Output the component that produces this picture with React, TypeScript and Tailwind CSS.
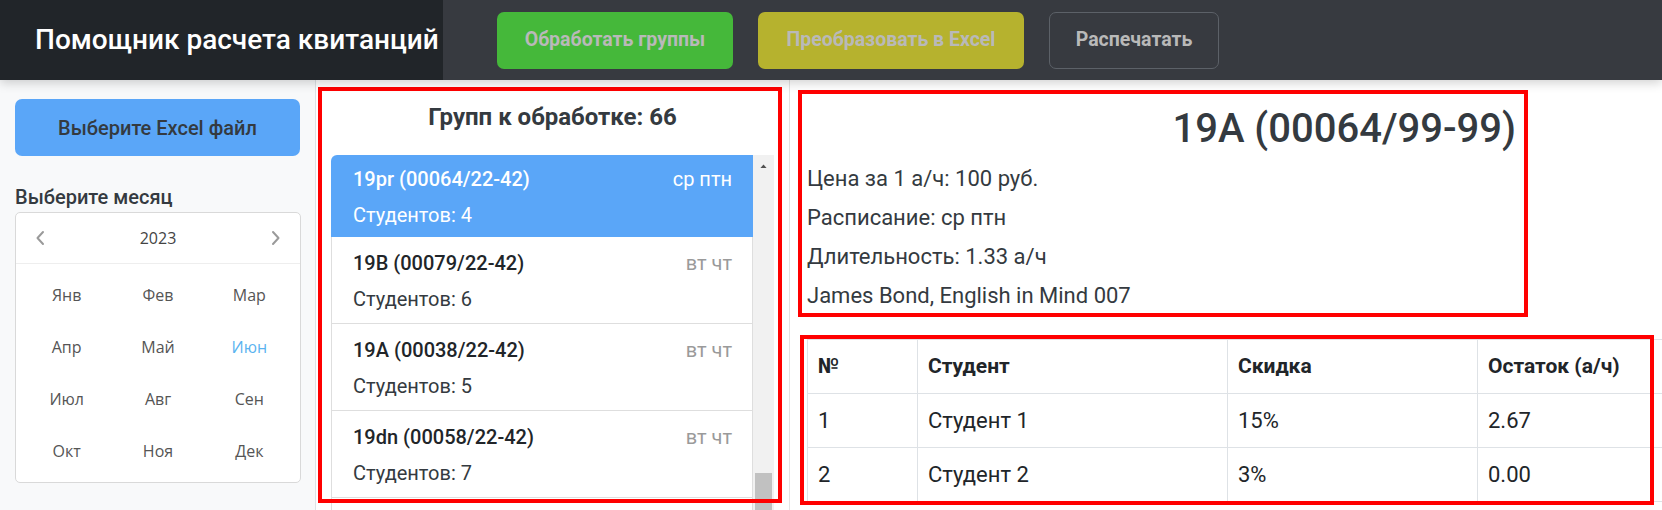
import React from "react";

const groups = [
  { name: "19pr (00064/22-42)", days: "ср птн", count: 4, selected: true },
  { name: "19B (00079/22-42)", days: "вт чт", count: 6 },
  { name: "19A (00038/22-42)", days: "вт чт", count: 5 },
  { name: "19dn (00058/22-42)", days: "вт чт", count: 7 },
];

const months = ["Янв", "Фев", "Мар", "Апр", "Май", "Июн", "Июл", "Авг", "Сен", "Окт", "Ноя", "Дек"];

function Chevron({ dir }: { dir: "l" | "r" }) {
  return (
    <svg width="10" height="16" viewBox="0 0 10 16" fill="none">
      {dir === "l" ? (
        <path d="M8 2 L2.5 8 L8 14" stroke="#9a9a9a" strokeWidth="2" strokeLinecap="round" strokeLinejoin="round" />
      ) : (
        <path d="M2 2 L7.5 8 L2 14" stroke="#9a9a9a" strokeWidth="2" strokeLinecap="round" strokeLinejoin="round" />
      )}
    </svg>
  );
}

export default function App() {
  return (
    <div className="w-[1662px] h-[510px] overflow-hidden bg-white flex flex-col font-['Roboto',sans-serif] text-[#343a40]">
      {/* Header */}
      <header className="relative z-10 h-[80px] flex shrink-0 bg-[#373a40] shadow-[0_3px_10px_rgba(0,0,0,0.18)]">
        <div className="w-[443px] bg-[#212529] flex items-center pl-[35px]">
          <span className="text-white text-[28px] font-medium">Помощник расчета квитанций</span>
        </div>
        <div className="flex items-center pl-[54px] gap-[25px]">
          <button className="w-[236px] h-[57px] rounded-[7px] bg-[#45b83a] text-[#b9b9b9] text-[19.5px] font-bold">
            Обработать группы
          </button>
          <button className="w-[266px] h-[57px] rounded-[7px] bg-[#b6b22e] text-[#b9b9b9] text-[19.5px] font-bold">
            Преобразовать в Excel
          </button>
          <button className="w-[170px] h-[57px] rounded-[7px] border border-[#5c6168] text-[#b9b9b9] text-[19.5px] font-bold">
            Распечатать
          </button>
        </div>
      </header>

      <div className="flex flex-1 min-h-0">
        {/* Sidebar */}
        <aside className="w-[316px] shrink-0 bg-[#f8f9fa] border-r border-[#dee2e6] px-[15px]">
          <button className="mt-[19px] w-[285px] h-[57px] rounded-[7px] bg-[#5aa6f8] text-[#343a40] text-[20px] font-medium">
            Выберите Excel файл
          </button>
          <div className="mt-[27px] leading-[28px] text-[20px] font-medium text-[#343a40]">Выберите месяц</div>
          <div className="mt-[1px] w-[286px] h-[271px] bg-white border border-[#d9d9d9] rounded-[5px] font-['Open_Sans',sans-serif]">
            <div className="h-[51px] border-b border-[#eeeeee] flex items-center justify-between px-[19px]">
              <Chevron dir="l" />
              <span className="text-[16px] text-[#444]">2023</span>
              <Chevron dir="r" />
            </div>
            <div className="grid grid-cols-3 px-[5px] pt-[5px]">
              {months.map((m) => (
                <div
                  key={m}
                  className={`h-[52px] flex items-center justify-center text-[16px] ${m === "Июн" ? "text-[#5ab3f0]" : "text-[#555]"}`}
                >
                  {m}
                </div>
              ))}
            </div>
          </div>
        </aside>

        {/* Middle column */}
        <section className="w-[474px] shrink-0 border-r border-[#e3e3e3] pl-[2px] pr-[7px] pt-[7px]">
          <div className="h-[416px] outline-4 outline-[#ff0000] -outline-offset-4 pl-[13px] pr-[8px] pt-[15px]">
            <div className="h-[30px] leading-[30px] text-center text-[24px] font-bold text-[#343a40]">
              Групп к обработке: 66
            </div>
            <div className="mt-[23px] h-[355px] flex overflow-hidden">
              <div className="w-[423px] flex flex-col">
                {groups.map((g, i) => (
                  <div
                    key={i}
                    className={
                      g.selected
                        ? "h-[82px] shrink-0 bg-[#5aa6f8] rounded-tl-[6px] pl-[22px] pr-[21px] pt-[6px] text-white"
                        : "h-[87px] shrink-0 border-x border-b border-[#dedede] pl-[21px] pr-[20px] pt-[8px]"
                    }
                  >
                    <div className="flex justify-between items-center h-[36px]">
                      <span className={`text-[20px] font-medium ${g.selected ? "text-white" : "text-[#212529]"}`}>{g.name}</span>
                      <span className={`text-[20px] ${g.selected ? "text-white" : "text-[#9a9a9a]"}`}>{g.days}</span>
                    </div>
                    <div className={`h-[36px] flex items-center text-[20px] ${g.selected ? "text-white" : "text-[#343a40]"}`}>
                      Студентов: {g.count}
                    </div>
                  </div>
                ))}
                <div className="h-[40px] shrink-0 border-x border-[#dedede]" />
              </div>
              <div className="w-[21px] bg-[#f1f1f1] flex flex-col items-center">
                <svg width="11" height="7" viewBox="0 0 11 7" className="mt-[9px]">
                  <path d="M0.5 6.5 L5.5 1 L10.5 6.5 Z" fill="#505050" />
                </svg>
                <div className="mt-[305px] w-[17px] h-[60px] bg-[#c1c1c1]" />
              </div>
            </div>
          </div>
        </section>

        {/* Right column */}
        <section className="flex-1 min-w-0">
          <div className="ml-[8px] mt-[10px] w-[730px] h-[227px] outline-4 outline-[#ff0000] -outline-offset-4 pl-[9px] pr-[12px] pt-[14px] text-[22px] text-[#343a40]">
            <div className="text-right text-[40px] leading-[50px] font-medium text-[#343a40]">19A (00064/99-99)</div>
            <div className="mt-[5px] leading-[39px]">Цена за 1 а/ч: 100 руб.</div>
            <div className="leading-[39px]">Расписание: ср птн</div>
            <div className="leading-[39px]">Длительность: 1.33 а/ч</div>
            <div className="leading-[39px]">James Bond, English in Mind 007</div>
          </div>

          <div className="ml-[10px] mt-[18px] w-[854px] h-[170px] outline-4 outline-[#ff0000] -outline-offset-4 pl-[7px] pt-[4px]">
            <table className="w-[855px] border-collapse text-[22px] text-[#212529] table-fixed">
              <colgroup>
                <col className="w-[110px]" />
                <col className="w-[310px]" />
                <col className="w-[250px]" />
                <col className="w-[185px]" />
              </colgroup>
              <thead>
                <tr className="h-[54px] text-[21px]">
                  <th className="border border-[#dee2e6] text-left font-bold px-[10px]">№</th>
                  <th className="border border-[#dee2e6] text-left font-bold px-[10px]">Студент</th>
                  <th className="border border-[#dee2e6] text-left font-bold px-[10px]">Скидка</th>
                  <th className="border border-[#dee2e6] text-left font-bold px-[10px] whitespace-nowrap">Остаток (а/ч)</th>
                </tr>
              </thead>
              <tbody>
                <tr className="h-[54px]">
                  <td className="border border-[#dee2e6] px-[10px]">1</td>
                  <td className="border border-[#dee2e6] px-[10px]">Студент 1</td>
                  <td className="border border-[#dee2e6] px-[10px]">15%</td>
                  <td className="border border-[#dee2e6] px-[10px]">2.67</td>
                </tr>
                <tr className="h-[54px]">
                  <td className="border border-[#dee2e6] px-[10px]">2</td>
                  <td className="border border-[#dee2e6] px-[10px]">Студент 2</td>
                  <td className="border border-[#dee2e6] px-[10px]">3%</td>
                  <td className="border border-[#dee2e6] px-[10px]">0.00</td>
                </tr>
              </tbody>
            </table>
          </div>
        </section>
      </div>
    </div>
  );
}
